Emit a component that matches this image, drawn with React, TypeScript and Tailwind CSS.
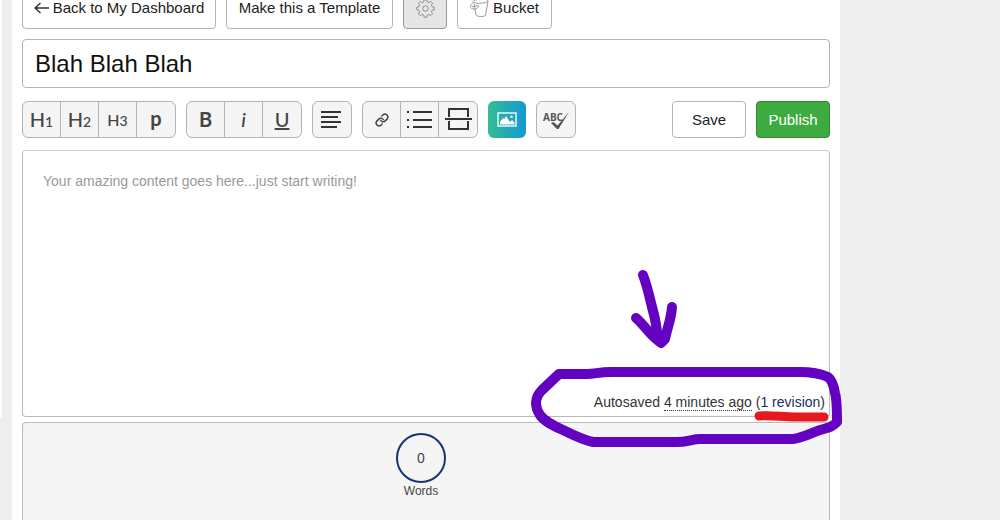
import { useState } from 'react';
import type { ReactNode } from 'react';

const outlineButton =
  'flex items-center justify-center rounded border border-[#b4b4b4] bg-white text-[15px] leading-5 text-[#222] hover:bg-neutral-50';

function ToolGroup({ label, children }: { label: string; children: ReactNode }) {
  return (
    <div
      role="group"
      aria-label={label}
      className="flex h-[37px] divide-x divide-[#b4b4b4] overflow-hidden rounded-md border border-[#b4b4b4] bg-[#f5f5f5]"
    >
      {children}
    </div>
  );
}

function ToolButton({ label, children }: { label: string; children: ReactNode }) {
  return (
    <button
      type="button"
      aria-label={label}
      title={label}
      className="flex w-[38px] items-center justify-center font-[Lato,sans-serif] text-xl leading-6 font-medium text-[#444] hover:bg-neutral-200"
    >
      {children}
    </button>
  );
}

function ArrowIcon() {
  return (
    <svg width="15" height="12" viewBox="0 0 15 12" fill="none" stroke="#333" strokeWidth="1.5" aria-hidden="true">
      <path d="M6.5 1 1 6l5.5 5M1 6h14" />
    </svg>
  );
}

function GearIcon() {
  return (
    <svg width="19" height="19" viewBox="0 0 24 24" fill="none" stroke="#8a8a8a" strokeWidth="1.2" aria-hidden="true">
      <path
        strokeLinejoin="round"
        d="M10.3 1h3.4l.6 2.8 1.9.8 2.4-1.6 2.4 2.4-1.6 2.4.8 1.9 2.8.6v3.4l-2.8.6-.8 1.9 1.6 2.4-2.4 2.4-2.4-1.6-1.9.8-.6 2.8h-3.4l-.6-2.8-1.9-.8-2.4 1.6L3 18.6l1.6-2.4-.8-1.9L1 13.7v-3.4l2.8-.6.8-1.9L3 5.4 5.4 3l2.4 1.6 1.9-.8z"
      />
      <circle cx="12" cy="12" r="3.5" />
    </svg>
  );
}

function BucketIcon() {
  return (
    <svg width="19" height="20" viewBox="0 0 19 20" fill="none" stroke="#999" strokeWidth="1" aria-hidden="true">
      <path d="M3 3.5C4 1 16 0 18 2.5c.5 1.5-2 2-5 2.5-4 .6-9 .5-10-1.5z" />
      <path d="M4 5.5 6 17c1 1.800 8 2 9.500.5L18 3" />
      <path d="M3.500 4.500C.5 6 0 9 1.500 10.500c2 1 5 .5 7-1.500.5-1-.5-2-1.500-1.500-2 1-3.500 1.500-5 1" />
    </svg>
  );
}

function AlignIcon() {
  return (
    <svg width="22" height="17" viewBox="0 0 22 17" stroke="#333" strokeWidth="2" aria-hidden="true">
      <path d="M0 1h20M0 6h17M0 11h20M0 16h16" />
    </svg>
  );
}

function LinkIcon() {
  return (
    <svg width="14" height="14" viewBox="0 0 24 24" fill="none" stroke="#444" strokeWidth="2.6" strokeLinecap="round" aria-hidden="true">
      <path d="M10 13a5 5 0 0 0 7.54.54l3-3a5 5 0 0 0-7.07-7.07l-1.72 1.71" />
      <path d="M14 11a5 5 0 0 0-7.54-.54l-3 3a5 5 0 0 0 7.07 7.07l1.71-1.71" />
    </svg>
  );
}

function ListIcon() {
  return (
    <svg width="26" height="17" viewBox="0 0 26 17" stroke="#333" strokeWidth="2" aria-hidden="true">
      <path d="M6 1h19M6 9h19M6 16h19M0 1h2M0 9h2M0 16h2" />
    </svg>
  );
}

function BreakIcon() {
  return (
    <svg width="27" height="23" viewBox="0 0 27 23" fill="none" stroke="#333" strokeWidth="2" aria-hidden="true">
      <path d="M4 9V1h19v8M0 11h27M4 13v8h19v-8" />
    </svg>
  );
}

function PictureIcon() {
  return (
    <svg width="20" height="15" viewBox="0 0 20 15" aria-hidden="true">
      <rect x="1" y="1" width="18" height="13" fill="none" stroke="#d8f3f5" strokeWidth="1.6" />
      <path fill="#fff" d="M3 12.5V10l3-4 1.500 1L9 4l4 6 2-2 2.500 2.500v2z" />
      <circle cx="14.5" cy="4.8" r="1.3" fill="#fff" />
    </svg>
  );
}

function SpellingIcon() {
  return (
    <svg width="28" height="24" viewBox="0 0 28 24" aria-hidden="true">
      <text x="1" y="13" fontFamily="'Open Sans', sans-serif" fontSize="10" fontWeight="700" fill="#555">
        ABC
      </text>
      <path fill="#555" d="M9 15l2.500-1 4 3.500L27 4 16.500 21h-1.500z" />
    </svg>
  );
}

// Hand-drawn marker strokes pointing at the revision link
function Annotation() {
  return (
    <svg
      className="pointer-events-none absolute -right-[19px] -bottom-[31px]"
      width="320"
      height="180"
      viewBox="528 267 320 180"
      fill="none"
      strokeLinecap="round"
      strokeLinejoin="round"
      aria-hidden="true"
    >
      <g stroke="#6402c2">
        <path
          strokeWidth="10"
          d="M559 374h28c8 0 12-2 24-2h189c12 0 21 2 28 5 4 3 6 10 7 16 2 7 2 13 2 29-4 5-10 6-17 8-9 3-17 8-27 9h-93c-8 0-12 3-24 3h-83c-10-2-20-7-30-12-9-4-18-8-23-15-6-9-5-18 2-25z"
        />
        <path strokeWidth="10" d="M643 275c4 10 7 24 10 36 3 10 4 20 5 29" />
        <path strokeWidth="10" d="M636 318c8 7 12 14 19 20l6 5 4-4c3-14 6-19 7-32" />
      </g>
      <path stroke="#e51a1e" strokeWidth="9" d="M759 416c15-1 22 1 36 1h29" />
    </svg>
  );
}

export default function App() {
  const [title, setTitle] = useState('Blah Blah Blah');
  const [content, setContent] = useState('');
  const words = content.split(/\s+/).filter(Boolean).length;

  return (
    <div className="flex h-screen gap-[10px] overflow-hidden bg-[#eee] font-['Liberation_Sans',Arial,sans-serif]">
      <aside className="h-[418px] w-[2px] shrink-0 rounded-br bg-white" />

      <main className="mr-40 flex min-w-0 flex-1 flex-col bg-white px-[10px]">
        <nav className="-mt-[13px] flex h-[42px] shrink-0 gap-[10px]">
          <button type="button" className={`${outlineButton} w-[194px] gap-1`}>
            <ArrowIcon />
            Back to My Dashboard
          </button>
          <button type="button" className={`${outlineButton} w-[167px]`}>Make this a Template</button>
          <button
            type="button"
            aria-label="Settings"
            className="flex w-[44px] items-center justify-center rounded border border-[#999] bg-[#e6e6e6]"
          >
            <GearIcon />
          </button>
          <button type="button" className={`${outlineButton} w-[95px] gap-1`}>
            <BucketIcon />
            Bucket
          </button>
        </nav>

        <input
          type="text"
          aria-label="Title"
          value={title}
          onChange={(e) => setTitle(e.target.value)}
          className="mt-[10px] h-[49px] w-full shrink-0 rounded border border-[#b4b4b4] px-3 text-2xl leading-7 text-[#111] outline-none"
        />

        <div className="mt-[13px] flex h-[37px] shrink-0 gap-[10px]">
          <ToolGroup label="Headings">
            <ToolButton label="Heading 1"><span>H<span className="text-sm">1</span></span></ToolButton>
            <ToolButton label="Heading 2"><span>H<span className="text-sm">2</span></span></ToolButton>
            <ToolButton label="Heading 3"><span className="text-base">H<span className="text-sm">3</span></span></ToolButton>
            <ToolButton label="Paragraph"><span className="pb-1 font-bold">p</span></ToolButton>
          </ToolGroup>
          <ToolGroup label="Text style">
            <ToolButton label="Bold"><b className="pb-0.5">B</b></ToolButton>
            <ToolButton label="Italic"><i className="pb-0.5">i</i></ToolButton>
            <ToolButton label="Underline"><u className="pb-0.5">U</u></ToolButton>
          </ToolGroup>
          <ToolGroup label="Alignment">
            <ToolButton label="Align left"><AlignIcon /></ToolButton>
          </ToolGroup>
          <ToolGroup label="Insert">
            <ToolButton label="Link"><LinkIcon /></ToolButton>
            <ToolButton label="List"><ListIcon /></ToolButton>
            <ToolButton label="Page break"><BreakIcon /></ToolButton>
          </ToolGroup>
          <button
            type="button"
            aria-label="Insert image"
            className="flex w-[38px] items-center justify-center rounded-md bg-linear-to-r from-[#36bd91] to-[#1896d2]"
          >
            <PictureIcon />
          </button>
          <ToolGroup label="Spelling">
            <ToolButton label="Check spelling"><SpellingIcon /></ToolButton>
          </ToolGroup>

          <button type="button" className={`${outlineButton} ml-auto w-[74px]`}>Save</button>
          <button
            type="button"
            className="w-[74px] rounded border border-[#2f8a32] bg-[#3dab3f] text-[15px] leading-5 text-white hover:bg-[#369a38]"
          >
            Publish
          </button>
        </div>

        <section className="relative mt-3 flex h-[267px] shrink-0 flex-col rounded border border-[#bbb] border-t-[#d0d0d0]">
          <textarea
            aria-label="Content"
            placeholder="Your amazing content goes here...just start writing!"
            value={content}
            onChange={(e) => setContent(e.target.value)}
            className="w-full flex-1 resize-none px-5 py-5 text-sm leading-5 text-[#333] outline-none placeholder:text-[#999]"
          />
          <p className="pr-1 pb-1 text-right text-sm leading-5 text-[#333]">
            Autosaved <span className="border-b border-dotted border-[#333]">4 minutes ago</span>{' '}
            (<a href="#revisions" className="text-[#1b2f5e]">1 revision</a>)
          </p>
          <Annotation />
        </section>

        <section className="mt-[5px] flex flex-1 flex-col items-center rounded-t border border-b-0 border-[#bbb] bg-[#f5f5f5] pt-[10px] pr-[10px] text-[#444]">
          <div className="flex size-[50px] items-center justify-center rounded-full border-2 border-[#17356f] text-sm">
            {words}
          </div>
          <span className="text-xs">Words</span>
        </section>
      </main>
    </div>
  );
}
